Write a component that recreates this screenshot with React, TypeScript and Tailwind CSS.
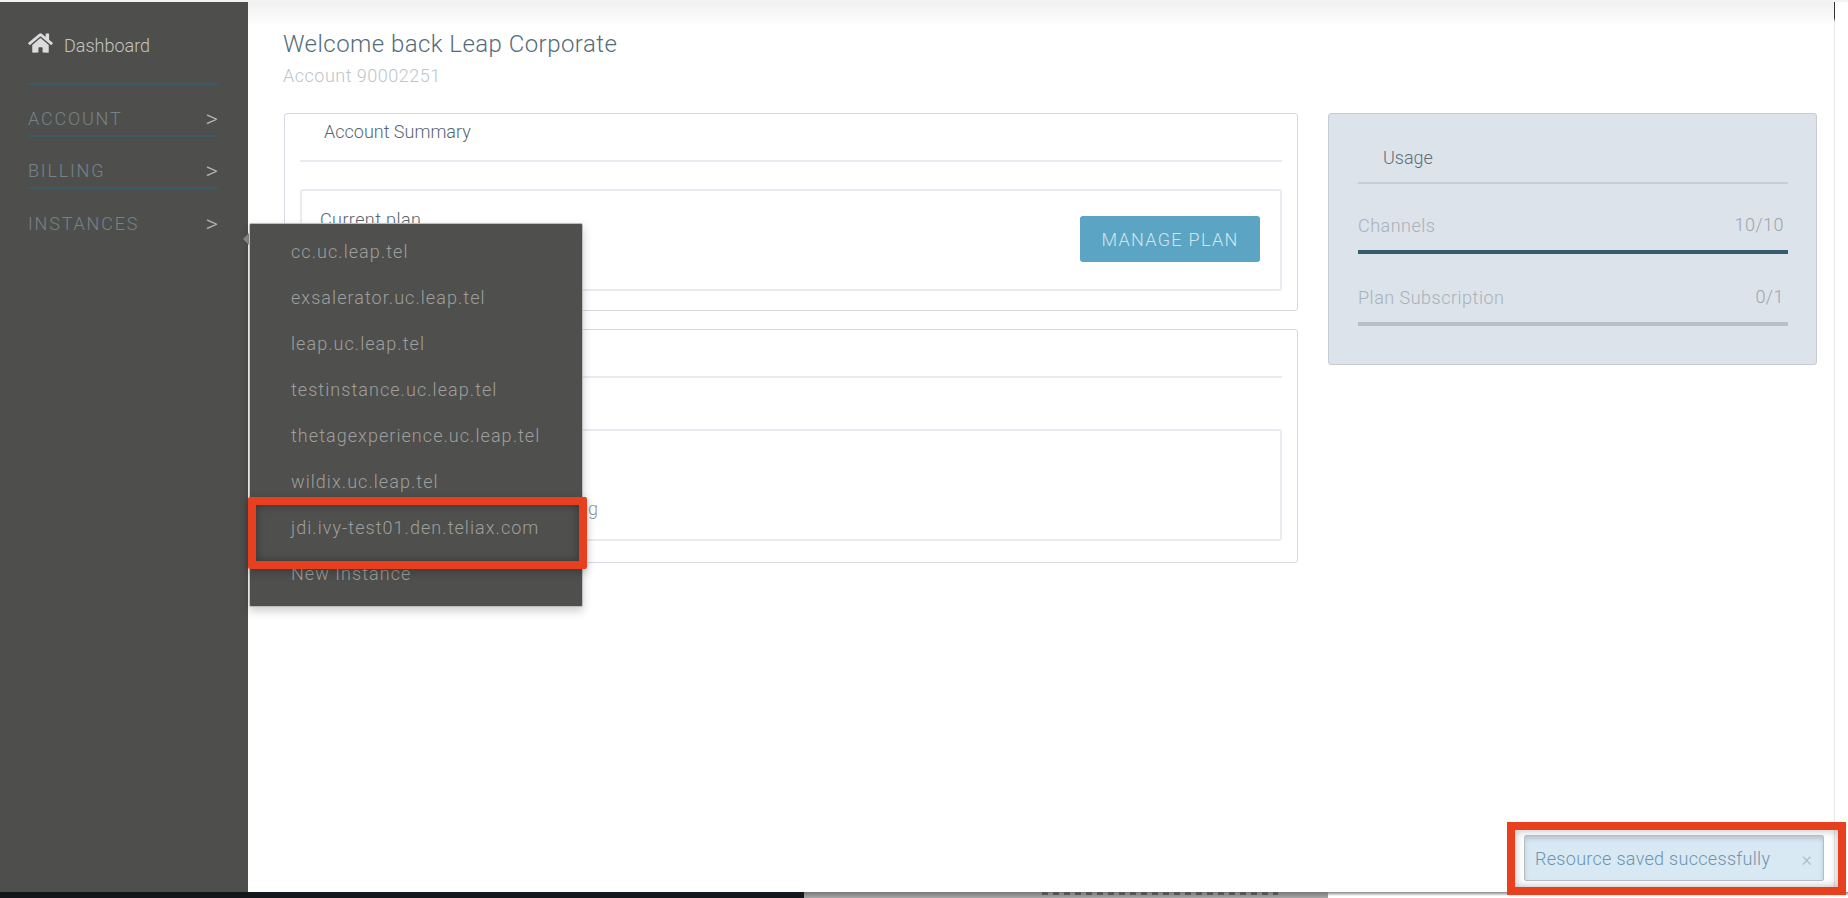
import { FaHome } from "react-icons/fa";

const items = [
  "cc.uc.leap.tel",
  "exsalerator.uc.leap.tel",
  "leap.uc.leap.tel",
  "testinstance.uc.leap.tel",
  "thetagexperience.uc.leap.tel",
  "wildix.uc.leap.tel",
  "jdi.ivy-test01.den.teliax.com",
  "New Instance",
];

function NavItem({ label, last }: { label: string; last?: boolean }) {
  return (
    <div
      className={`flex h-[52px] items-end justify-between ${last ? "pb-[6px]" : "border-b-2 border-[#3a5a68] pb-[5px]"}`}
    >
      <span className="text-[18px] leading-[22px] tracking-[1.8px] text-[#74838a]">{label}</span>
      <span className="text-[24px] leading-[22px] text-[#b5b5b3]">&gt;</span>
    </div>
  );
}

function UsageRow({ label, value, barClass, first }: { label: string; value: string; barClass: string; first?: boolean }) {
  return (
    <div className={first ? "mt-[32px]" : "mt-[34px]"}>
      <div className="flex justify-between pr-[4px] text-[18px] leading-[20px] tracking-[0.5px]">
        <span className="text-[#a9b1bb]">{label}</span>
        <span className="-mt-px text-[#9ca5af]">{value}</span>
      </div>
      <div className={`mt-[14px] h-[4px] ${barClass}`} />
    </div>
  );
}

export default function App() {
  return (
    <div className="relative h-[898px] w-full overflow-hidden bg-white font-['Roboto',sans-serif] font-light">
      <div className="h-[2px] bg-[#f3f3f3]" />
      <div className="flex h-[890px]">
        <aside className="w-[248px] shrink-0 bg-[#4e4f4c] pl-[28px] pr-[30px] pt-[30px]">
          <div className="flex h-[22px] items-center gap-[11px]">
            <FaHome className="h-[22px] w-[25px] text-[#dcdcdc]" />
            <span className="pt-[5px] text-[18px] leading-[20px] text-[#c4c4c2]">Dashboard</span>
          </div>
          <div className="mt-[29px] border-b-2 border-[#3a5a68]" />
          <NavItem label="ACCOUNT" />
          <NavItem label="BILLING" />
          <NavItem label="INSTANCES" last />
        </aside>

        <main className="flex-1 bg-[linear-gradient(#f1f1f1,#ffffff_24px)] pl-[35px] pt-[28px]">
          <h1 className="text-[24px] leading-[28px] tracking-[0.45px] text-[#546c7a]">Welcome back Leap Corporate</h1>
          <p className="mt-[8px] text-[18px] leading-[20px] tracking-[0.5px] text-[#bcc5ca]">Account 90002251</p>

          <div className="ml-px mt-[27px] flex gap-[30px]">
            <div className="w-[1014px] shrink-0">
              <section className="h-[198px] rounded-[3px] border border-[#d5dae1] px-[15px]">
                <div className="h-[48px] border-b-2 border-[#e8ebef] pl-[24px] pt-[8px] text-[18px] leading-[20px] text-[#56666f]">
                  Account Summary
                </div>
                <div className="mt-[27px] flex h-[102px] items-center justify-between rounded-[3px] border-2 border-[#e8ebef] pl-[18px] pr-[20px]">
                  <div className="-mt-[40px] text-[18px] leading-[20px] tracking-[0.4px] text-[#56666f]">Current plan</div>
                  <button className="-mt-[2px] h-[46px] w-[180px] rounded-[3px] bg-[#5ba4c4] text-[18px] tracking-[1.3px] text-[#cfe5ee]">
                    MANAGE PLAN
                  </button>
                </div>
              </section>

              <section className="mt-[18px] h-[234px] rounded-[3px] border border-[#d5dae1] px-[15px]">
                <div className="h-[48px] border-b-2 border-[#e8ebef]" />
                <div className="mt-[51px] h-[112px] rounded-[3px] border-2 border-[#e8ebef] pt-[68px]">
                  <div className="w-[296px] text-right text-[18px] leading-[20px] text-[#8c979e]">Billing</div>
                </div>
              </section>
            </div>

            <section className="h-[252px] w-[489px] shrink-0 rounded-[3px] border border-[#c6ccd4] bg-[#dce3ea] pl-[29px] pr-[28px]">
              <div className="h-[70px] border-b-2 border-[#c6ced6] pl-[25px] pt-[34px] text-[18px] leading-[20px] text-[#5c6e78]">
                Usage
              </div>
              <UsageRow first label="Channels" value="10/10" barClass="bg-[#355d6c]" />
              <UsageRow label="Plan Subscription" value="0/1" barClass="bg-[#b7bfc8]" />
            </section>
          </div>
        </main>
        <div className="w-px bg-[linear-gradient(#333333_16px,#e8e8e8_20px)]" />
        <div className="w-[13px]" />
      </div>
      <div className="flex h-[6px] overflow-hidden">
        <div className="w-[804px] bg-[#14171c]" />
        <div className="w-[524px] bg-[linear-gradient(#777777,#a8a8a8)] pl-[238px]">
          <div className="h-[3px] w-[236px] bg-[repeating-linear-gradient(90deg,#555555_0_6px,transparent_6px_11px)]" />
        </div>
        <div className="flex-1 bg-[linear-gradient(#888888,#ffffff_4px)]" />
      </div>

      {/* Instances flyout */}
      <div className="absolute left-[243px] top-[233px] h-0 w-0 border-y-[6px] border-r-[6px] border-y-transparent border-r-[#8c8c8a]" />
      <div className="absolute left-[249px] top-[223px] h-[384px] w-[334px] rounded-[2px] border border-[#bdbdbd] bg-[#4f4f4d] pl-[41px] pt-[4px] shadow-[0_4px_10px_rgba(0,0,0,0.2)]">
        {items.map((item) => (
          <div key={item} className="flex h-[46px] items-center text-[18px] tracking-[1.05px] text-[#9f9f9d]">
            {item}
          </div>
        ))}
      </div>

      {/* Callouts */}
      <div className="absolute left-[248px] top-[497px] h-[72px] w-[339px] rounded-[2px] border-[8px] border-[#e8401f] shadow-[0_3px_8px_rgba(0,0,0,0.25),inset_0_0_8px_rgba(0,0,0,0.35)]" />
      <div className="absolute left-[1507px] top-[822px] h-[73px] w-[339px] border-[8px] border-[#e8401f] pl-[9px] pt-[5px] shadow-[inset_0_0_8px_rgba(0,0,0,0.3)]">
        <div className="flex h-[46px] w-[300px] items-center justify-between rounded-[2px] border border-[#b5bcc3] bg-[#d9e9f4] pl-[10px] pr-[11px] pt-px shadow-[inset_0_3px_4px_rgba(0,0,0,0.15)]">
          <span className="text-[18px] tracking-[0.3px] text-[#6d94ad]">Resource saved successfully</span>
          <span className="text-[20px] text-[#a8bac6]">×</span>
        </div>
      </div>
    </div>
  );
}
